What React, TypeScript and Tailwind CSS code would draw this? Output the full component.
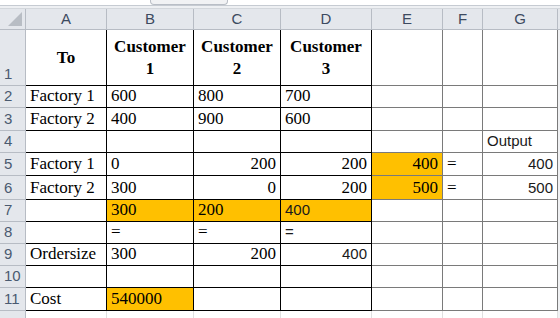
import React from 'react';

type Cell = {
    v?: string;
    align?: 'l' | 'r' | 'c';
    sans?: boolean;
    fill?: boolean;
    bold?: boolean;
};

const cols = ['A', 'B', 'C', 'D', 'E', 'F', 'G'];
const heights = [56, 22, 23, 22, 23, 24, 22, 22, 22, 22, 23];

const rows: Cell[][] = [
    [{ v: 'To', bold: true, align: 'c' }, { v: 'Customer\n1', bold: true, align: 'c' }, { v: 'Customer\n2', bold: true, align: 'c' }, { v: 'Customer\n3', bold: true, align: 'c' }, {}, {}, {}],
    [{ v: 'Factory 1' }, { v: '600' }, { v: '800' }, { v: '700' }, {}, {}, {}],
    [{ v: 'Factory 2' }, { v: '400' }, { v: '900' }, { v: '600' }, {}, {}, {}],
    [{}, {}, {}, {}, {}, {}, { v: 'Output', sans: true }],
    [{ v: 'Factory 1' }, { v: '0' }, { v: '200', align: 'r' }, { v: '200', align: 'r' }, { v: '400', align: 'r', fill: true }, { v: '=' }, { v: '400', align: 'r', sans: true }],
    [{ v: 'Factory 2' }, { v: '300' }, { v: '0', align: 'r' }, { v: '200', align: 'r' }, { v: '500', align: 'r', fill: true }, { v: '=' }, { v: '500', align: 'r', sans: true }],
    [{}, { v: '300', fill: true }, { v: '200', fill: true }, { v: '400', fill: true, sans: true }, {}, {}, {}],
    [{}, { v: '=' }, { v: '=' }, { v: '=', sans: true }, {}, {}, {}],
    [{ v: 'Ordersize' }, { v: '300' }, { v: '200', align: 'r' }, { v: '400', align: 'r', sans: true }, {}, {}, {}],
    [{}, {}, {}, {}, {}, {}, {}],
    [{ v: 'Cost' }, { v: '540000', fill: true }, {}, {}, {}, {}, {}],
];

function DataCell({ cell, col, row }: { cell: Cell, col: number, row: number }) {
    const boxed = col < 4;
    const border = boxed ? 'border-black' : 'border-[#7a7a7a]';
    const font = cell.sans
        ? "font-['Liberation_Sans',sans-serif] text-[15px] text-[#1a1a1a]"
        : "font-['Liberation_Serif',serif] text-[17px] text-black";
    const align = cell.align === 'r' ? 'justify-end text-right' : cell.align === 'c' ? 'justify-center text-center' : 'justify-start';
    const vertical = row === 0 ? 'items-center leading-[22px]' : 'items-end leading-[20px] pb-[1px]';
    return (
        <div
            className={`flex ${vertical} ${align} ${font} px-[4px] border-r border-b ${border} ${cell.fill ? 'bg-[#ffc000]' : 'bg-white'} ${cell.bold ? 'font-bold' : ''} whitespace-pre overflow-hidden`}
        >
            {cell.v}
        </div>
    );
}

export default function App() {
    return (
        <div className="w-[560px] h-[318px] bg-white overflow-hidden relative">
            {/* ribbon edge with sheet tab */}
            <div className="h-[6px] flex items-end bg-white border-b border-[#c6cbd2]">
                <div className="ml-[150px] w-[78px] h-[5px] rounded-b-[4px] border border-t-0 border-[#b9bec6] bg-[#f1f2f4]" />
            </div>
            <div className="h-[3px] bg-[#eef0f3] border-b border-[#d3d7dc]" />
            <div
                className="grid grid-cols-[26px_81px_87px_87px_91px_71px_40px_75px_2px]"
                style={{ gridTemplateRows: `21px ${heights.map(h => `${h}px`).join(' ')} 12px` }}
            >
                {/* header row */}
                <div className="bg-[#e4e7ec] border-r border-b border-[#b7bcc4] relative">
                    <div className="absolute right-[3px] bottom-[3px] w-0 h-0 border-l-[14px] border-l-transparent border-b-[14px] border-b-[#b8bdc4]" />
                </div>
                {cols.map(c => (
                    <div key={c} className="bg-[#e4e7ec] border-r border-b border-[#b7bcc4] flex items-center justify-center font-['Liberation_Sans',sans-serif] text-[15px] text-[#3c4a60]">
                        {c}
                    </div>
                ))}
                <div className="bg-[#e4e7ec] border-b border-[#b7bcc4]" />

                {rows.map((r, ri) => (
                    <React.Fragment key={ri}>
                        <div className="bg-[#e4e7ec] border-r border-b border-[#b7bcc4] flex items-end pl-[4px] pb-[1px] leading-[20px] font-['Liberation_Sans',sans-serif] text-[15px] text-[#4a5a70]">
                            {ri + 1}
                        </div>
                        {r.map((cell, ci) => (
                            <DataCell key={ci} cell={cell} col={ci} row={ri} />
                        ))}
                        <div className="bg-[#f0f1f3]" />
                    </React.Fragment>
                ))}

                {/* partial row 12 */}
                <div className="bg-[#e4e7ec] border-r border-[#b7bcc4]" />
                {cols.map(c => (
                    <div key={c} className="bg-white border-r border-[#e0e0e0]" />
                ))}
                <div className="bg-[#f0f1f3]" />
            </div>
        </div>
    );
}
